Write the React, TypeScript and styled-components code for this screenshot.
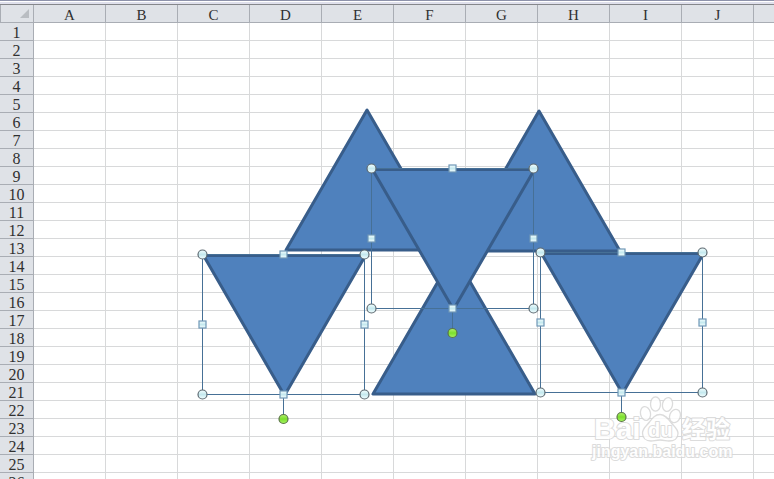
import React from "react";
import styled, { createGlobalStyle } from "styled-components";

const GlobalStyle = createGlobalStyle`
  body {
    margin: 0;
    background: #ffffff;
  }
`;

const Workbook = styled.main`
  position: relative;
  height: 100vh;
  overflow: hidden;
  background: #ffffff;
`;

const TopEdge = styled.div`
  box-sizing: border-box;
  height: 5px;
  border-top: 1px solid #8e93ab;
  border-bottom: 1px solid #85878b;
  background: linear-gradient(#ffffff 1px, #dfe0ec 1px);
`;

const Sheet = styled.table`
  table-layout: fixed;
  width: 100%;
  border-collapse: separate;
  border-spacing: 0;

  tr > :last-child {
    border-right: 0;
  }
`;

const IndexCol = styled.col`
  width: 34px;
`;

const DataCol = styled.col`
  width: 72px;
`;

const HeaderCell = styled.th`
  box-sizing: border-box;
  height: 18px;
  padding: 0;
  border-right: 1px solid #a9adb4;
  border-bottom: 1px solid #a9adb4;
  background: #dfe2e7;
  color: #303030;
  font-weight: 400;
  text-align: center;
`;

const ColumnHeader = styled(HeaderCell)`
  padding-top: 3px;
  font: 400 15px/14px "Liberation Serif", serif;
`;

const RowHeader = styled(HeaderCell)`
  padding-top: 3px;
  font: 400 16px/14px "Liberation Serif", serif;
`;

const Corner = styled(HeaderCell)`
  border-left: 1px solid #a9adb4;
`;

const SelectAll = styled.button`
  display: flex;
  align-items: center;
  justify-content: flex-end;
  width: 100%;
  height: 17px;
  padding: 0 4px 0 0;
  border: 0;
  background: transparent;
`;

const Cell = styled.td`
  box-sizing: border-box;
  height: 18px;
  padding: 0;
  border-right: 1px solid #d8d9da;
  border-bottom: 1px solid #d8d9da;
`;

const DrawingLayer = styled.svg`
  position: absolute;
  top: 0;
  left: 0;
  pointer-events: none;
`;

const WatermarkText = styled.text<{ $size: number }>`
  font: 700 ${(p) => p.$size}px "Liberation Sans", "Noto Sans CJK SC", sans-serif;
  fill: #ffffff;
  stroke: #d6d6d6;
  stroke-width: 2px;
  stroke-linejoin: round;
  paint-order: stroke;
`;

const WIDTH = 162;
const HEIGHT = 140;

type Point = { x: number; y: number };

function Triangle({ x, y, flipped }: Point & { flipped?: boolean }) {
  const tip = flipped ? y + HEIGHT : y;
  const base = flipped ? y : y + HEIGHT;
  return (
    <polygon
      points={`${x},${base} ${x + WIDTH},${base} ${x + WIDTH / 2},${tip}`}
      fill="#4f81bd"
      stroke="#385d8a"
      strokeWidth="3"
      strokeLinejoin="round"
    />
  );
}

function Selection({ x, y }: Point) {
  const mx = x + WIDTH / 2;
  const my = y + HEIGHT / 2;
  const right = x + WIDTH;
  const bottom = y + HEIGHT;
  const corners = [[x, y], [right, y], [x, bottom], [right, bottom]];
  const sides = [[mx, y], [x, my], [right, my], [mx, bottom]];
  return (
    <g>
      <path
        d={`M${x} ${y}H${right}V${bottom}H${x}ZM${mx} ${bottom}v20`}
        fill="none"
        stroke="#467096"
      />
      {corners.map(([cx, cy]) => (
        <circle key={`${cx}-${cy}`} cx={cx} cy={cy} r="4.5" fill="url(#handle)" stroke="#5d6971" strokeWidth="1.2" />
      ))}
      {sides.map(([cx, cy]) => (
        <rect key={`${cx}-${cy}`} x={cx - 3.5} y={cy - 3.5} width="7" height="7" fill="url(#handle)" stroke="#6f97b6" strokeWidth="1.2" />
      ))}
      <circle cx={mx} cy={bottom + 24.5} r="4.5" fill="url(#rotate)" stroke="#5a7348" strokeWidth="1.2" />
    </g>
  );
}

function Watermark() {
  return (
    <g opacity="0.85">
      <WatermarkText $size={30} x="594" y="439">Bai</WatermarkText>
      <g fill="#ffffff" stroke="#d6d6d6" strokeWidth="1.3">
        <ellipse cx="645.5" cy="413.5" rx="5" ry="7" transform="rotate(-12 645.5 413.5)" />
        <ellipse cx="655.5" cy="404" rx="5" ry="7.2" />
        <ellipse cx="667.5" cy="404.5" rx="5" ry="7" transform="rotate(12 667.5 404.5)" />
        <ellipse cx="675" cy="416" rx="5.3" ry="6.8" transform="rotate(20 675 416)" />
        <path d="M660 414.500c5 0 8 4 11 8s7 6 7 11-4 7.500-9 7.500c-3 0-5-1-9-1s-6 1-9 1c-5 0-8.500-3-8.500-8s4-7 7-11 5.500-7.500 10.500-7.500Z" />
      </g>
      <WatermarkText $size={20} x="648" y="437">du</WatermarkText>
      <WatermarkText $size={24} x="682" y="438">经验</WatermarkText>
      <WatermarkText $size={16} x="592" y="457">jingyan.baidu.com</WatermarkText>
    </g>
  );
}

const upright: Point[] = [
  { x: 286, y: 110 },
  { x: 458, y: 111 },
  { x: 373, y: 254 },
];

const selected: Point[] = [
  { x: 371.5, y: 168.5 },
  { x: 202.5, y: 254.5 },
  { x: 540.5, y: 252.5 },
];

const columns = "ABCDEFGHIJ".split("");
const rows = Array.from({ length: 26 }, (_, i) => i + 1);

export default function App() {
  return (
    <>
      <GlobalStyle />
      <Workbook>
        <TopEdge />
        <Sheet>
          <colgroup>
            <IndexCol />
            {columns.map((c) => <DataCol key={c} />)}
            <col />
          </colgroup>
          <thead>
            <tr>
              <Corner>
                <SelectAll aria-label="Select all">
                  <svg width="9" height="9" viewBox="0 0 9 9" aria-hidden="true">
                    <path d="M9 0V9H0Z" fill="#b9bdc2" />
                  </svg>
                </SelectAll>
              </Corner>
              {columns.map((c) => <ColumnHeader key={c} scope="col">{c}</ColumnHeader>)}
              <ColumnHeader as="td" />
            </tr>
          </thead>
          <tbody>
            {rows.map((r) => (
              <tr key={r}>
                <RowHeader scope="row">{r}</RowHeader>
                {columns.map((c) => <Cell key={c} />)}
                <Cell />
              </tr>
            ))}
          </tbody>
        </Sheet>
        <DrawingLayer width="774" height="479" viewBox="0 0 774 479">
          <defs>
            <linearGradient id="handle" x1="0" y1="0" x2="0" y2="1">
              <stop offset="0" stopColor="#f4ffff" />
              <stop offset="0.5" stopColor="#c5e9ef" />
              <stop offset="1" stopColor="#f4ffff" />
            </linearGradient>
            <linearGradient id="rotate" x1="0" y1="0" x2="0" y2="1">
              <stop offset="0" stopColor="#b4f070" />
              <stop offset="0.5" stopColor="#7be02c" />
              <stop offset="1" stopColor="#a8f565" />
            </linearGradient>
          </defs>
          {upright.map((p) => <Triangle key={p.x} {...p} />)}
          {selected.map((p) => <Triangle key={p.x} x={p.x + 1} y={p.y + 1} flipped />)}
          {selected.map((p) => <Selection key={p.x} {...p} />)}
          <Watermark />
        </DrawingLayer>
      </Workbook>
    </>
  );
}
